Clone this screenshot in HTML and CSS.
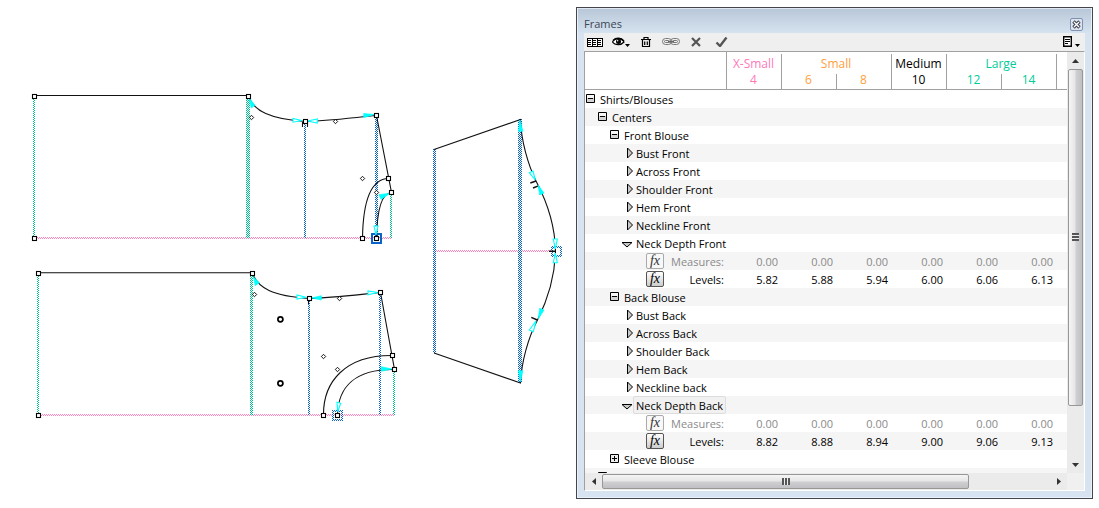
FILE: index.html
```html
<!DOCTYPE html>
<html lang="en">
<head>
<meta charset="utf-8">
<title>Frames</title>
<link rel="stylesheet" href="styles.css">
</head>
<body>
<svg class="defs" aria-hidden="true">
  <defs>
    <pattern id="green" width="2" height="2" patternUnits="userSpaceOnUse"><path d="M0 0h1v1H0zM1 1h1v1H1z" fill="#00c48c"/></pattern>
    <pattern id="blue" width="2" height="2" patternUnits="userSpaceOnUse"><path d="M0 0h1v1H0zM1 1h1v1H1z" fill="#0a64c8"/></pattern>
    <pattern id="pink" width="2" height="2" patternUnits="userSpaceOnUse"><path d="M0 0h1v1H0zM1 1h1v1H1z" fill="#ff82be"/></pattern>
    <symbol id="minus" viewBox="0 0 12 12"><path d="M1.500 1.500h8v8h-8z" fill="#d4d4d4" stroke="#000"/><path d="M2 2h7v3H2z" fill="#f6f6f6"/><path d="M3 5.500h5" stroke="#000"/></symbol>
    <symbol id="plus" viewBox="0 0 12 12"><path d="M1.500 1.500h8v8h-8z" fill="#eee" stroke="#000"/><path d="M3 5.500h5M5.500 3v5" stroke="#000"/></symbol>
    <symbol id="closed" viewBox="0 0 12 12"><path d="M6.500 1v10l5-5z" fill="#c8c8c8" stroke="#000" stroke-width="1"/></symbol>
    <symbol id="open" viewBox="0 0 12 12"><path d="M1 5.500h10l-5 4.500z" fill="#c8c8c8" stroke="#000" stroke-width="1"/></symbol>
    <g id="handle"><rect x="-2" y="-2" width="4" height="4" fill="#fff" stroke="#000" stroke-width="1.100"/></g>
    <g id="diamond"><path d="M0-2.200L2.200 0 0 2.200-2.200 0z" fill="#fff" stroke="#000" stroke-width=".9"/></g>
  </defs>
</svg>
<main class="workspace">
  <section class="drawing" aria-label="Pattern pieces">
    <svg class="pieces" width="576" height="508" viewBox="0 0 576 508" role="img" aria-label="Front, back and sleeve pattern">
      <g shape-rendering="crispEdges">
        <path fill="url(#pink)" d="M35 237h356v2H35zM39 414h355v2H39zM435 250h116v2H435z"/>
        <path fill="url(#green)" d="M33 97h2v141h-2zM246 97h4v141h-4zM390 193h2v45h-2zM37 274h2v141h-2zM250 274h3v141h-3zM393 370h2v45h-2z"/>
        <path fill="url(#blue)" d="M304 122h2v116h-2zM375 116h3v122h-3zM308 299h2v116h-2zM379 293h2v122h-2zM433 149h3v204h-3zM518 119h4v264h-4z"/>
        <path fill="url(#blue)" fill-rule="evenodd" d="M332 410h11v11h-11zM334 412h7v7h-7zM551 246h11v11h-11zM553 248h7v7h-7z"/>
        <path fill="none" stroke="#0a64c8" stroke-width="2" d="M372 234h9v9h-9z"/>
      </g>
      <g fill="none" stroke="#111" stroke-width="1.100">
        <path d="M34 95.500H248M248.500 96.500C254 111 270 119 305.500 121.500C325 121 350 118 376.500 115.500L391.500 192.500C381 193 377 212 376.500 238.500M388.500 178.500C371 179 363 200 362.500 238.500M302.500 127v-5M307.500 127v-5"/>
        <path d="M38 272.700H252M252.500 273.500C258 288 272 296 309.500 298.500C330 298 355 295 380.500 292.500L394.500 369.500C355 369 338 387 337.500 415.500M392.500 355.500C345 355 323 382 323.500 415.500M308.500 298v6"/>
        <path d="M434 149.500L520.500 119.500C521 140 528 165 536.500 182C547 202 555 225 555.500 251C555 278 548 299 537.500 320C528 338 521.500 362 520.500 383L434 353"/>
        <path stroke-width="1.400" d="M530.300 183l5.700-2M533 188l6-2.300M531.300 317.300l6 2.700M549 251.300h7"/>
      </g>
      <g fill="#0ff" stroke="#0ff" stroke-width=".7">
        <path d="M249 98l2.300 10 3.700-2.700zM363.700 113.500v4.200l10.300-3.200zM379 194.700l2 4.600 9-6zM253.300 276.700l2 9 4-3zM311.700 298l9.600-2.300v4.300zM381.300 366.700v4.600l10.400-2.300zM520 120l-1.500 11.300h4.400zM538 185l1.700 10 4.300-2zM539.700 308.300l4.300 1.700-5.700 9zM518.500 370.700h4.400L520.300 382z"/>
        <path fill="#fff" stroke-width="1.100" d="M293 118.500v3.700l8.700-1.700zM307.500 121l9.800-2v4zM374 226h4l-2 9zM297 295v4l9-1.700zM368 291v3.700l9.700-2.200zM337 402.300l3.700 1-3 8.400zM529.300 172.700l3.700-1.700 2.300 9zM553.300 239h4l-2 10zM553.300 262.700h4l-2-9.700zM529.300 330l4 1.700 2.700-10.700z"/>
      </g>
      <use href="#handle" x="34.500" y="96.500"/><use href="#handle" x="34.500" y="238.500"/>
      <use href="#handle" x="248.500" y="96.500"/><use href="#handle" x="305.500" y="121.500"/>
      <use href="#handle" x="376.500" y="115.500"/><use href="#handle" x="388.500" y="178.500"/>
      <use href="#handle" x="391.500" y="192.500"/><use href="#handle" x="362.500" y="238.500"/>
      <use href="#handle" x="376.500" y="238.500"/>
      <use href="#handle" x="38.500" y="273.500"/><use href="#handle" x="38.500" y="415.500"/>
      <use href="#handle" x="252.500" y="273.500"/><use href="#handle" x="309.500" y="298.500"/>
      <use href="#handle" x="380.500" y="292.500"/><use href="#handle" x="392.500" y="355.500"/>
      <use href="#handle" x="394.500" y="369.500"/><use href="#handle" x="323.500" y="415.500"/>
      <use href="#handle" x="337.500" y="415.500"/>
      <use href="#diamond" x="251.500" y="117.500"/><use href="#diamond" x="335.500" y="121.500"/>
      <use href="#diamond" x="362.500" y="178.500"/><use href="#diamond" x="376.500" y="192.500"/>
      <use href="#diamond" x="254.500" y="294.500"/><use href="#diamond" x="339.500" y="298.500"/>
      <use href="#diamond" x="323.500" y="356.500"/><use href="#diamond" x="337.500" y="369.500"/>
      <g fill="#fff" stroke="#000" stroke-width="1.700"><circle cx="280.400" cy="319.300" r="2.500"/><circle cx="280.400" cy="383.300" r="2.500"/></g>
    </svg>
  </section>

  <section class="panel" aria-labelledby="panel-title">
    <header class="titlebar">
      <h1 class="title" id="panel-title">Frames</h1>
      <button class="close" aria-label="Close"><svg width="9" height="9" viewBox="0 0 9 9"><path d="M1.500 1.500l6 6M7.500 1.500l-6 6" stroke="#3c4250" stroke-width="3.400"/><path d="M2 2l5 5M7 2L2 7" stroke="#fff" stroke-width="1.300"/></svg></button>
    </header>
    <div class="toolbar" role="toolbar" aria-label="Frames tools">
      <button class="tool" aria-label="Columns"><svg width="16" height="9" viewBox="0 0 16 9"><path d="M0 0h16v9H0z"/><path d="M1 1h4v7H1zM6 1h4v7H6zM11 1h4v7h-4z" fill="#fff"/><path d="M1 2h3v1H1zM1 4h3v1H1zM1 6h3v1H1zM6 2h3v1H6zM6 4h3v1H6zM6 6h3v1H6zM11 2h3v1h-3zM11 4h3v1h-3zM11 6h3v1h-3z"/></svg></button>
      <button class="tool" aria-label="Visibility"><svg width="18" height="10" viewBox="0 0 18 10"><path d="M.5 5C3 .5 9 .5 12 5 9 8.500 3 8.500.5 5z" fill="#fff" stroke="#000" stroke-width="1.200"/><path d="M1 3.500C4 .5 9 .5 12 4" fill="none" stroke="#000" stroke-width="1.400"/><circle cx="6.500" cy="4.500" r="2.500"/><circle cx="5.700" cy="3.800" r=".7" fill="#fff"/><path d="M13 7h5l-2.500 3z"/></svg></button>
      <button class="tool" aria-label="Delete"><svg width="10" height="10" viewBox="0 0 10 10"><path d="M0 2.500h10M3 2V.5h4V2M1.500 3v6.500h7V3M3.700 4.500V8M6.300 4.500V8" fill="none" stroke="#000" stroke-width="1.200"/></svg></button>
      <button class="tool" aria-label="Link"><svg width="18" height="8" viewBox="0 0 18 8"><g fill="none" stroke="#777" stroke-width="1"><rect x=".5" y=".5" width="9" height="6" rx="3"/><rect x="2.500" y="2.500" width="5" height="2" rx="1"/><rect x="8.500" y=".5" width="9" height="6" rx="3"/><rect x="10.500" y="2.500" width="5" height="2" rx="1"/></g><path d="M6 3h6v1.500H6z" fill="#666"/></svg></button>
      <button class="tool" aria-label="Cancel"><svg width="10" height="10" viewBox="0 0 10 10"><path d="M1 1l8 8M9 1L1 9" stroke="#555" stroke-width="2.200"/></svg></button>
      <button class="tool" aria-label="Apply"><svg width="16" height="10" viewBox="-4 0 16 10"><path d="M.5 5.500L4 9 10.500.5" fill="none" stroke="#555" stroke-width="2.400"/></svg></button>
      <button class="tool tool-menu" aria-label="Panel menu"><svg width="18" height="12" viewBox="0 0 18 12"><path d="M.7.7h7.600v9.600H.7z" fill="#fff" stroke="#000" stroke-width="1.400"/><path d="M2 3.500h5M2 5.500h5M2 7.500h3" stroke="#000"/><path d="M12 8h5l-2.500 3z"/></svg></button>
    </div>
    <div class="content">
      <div class="tree">
        <table class="grid">
          <colgroup><col class="c-name"><col class="c-size"><col class="c-size"><col class="c-size"><col class="c-size"><col class="c-size"><col class="c-size"><col></colgroup>
          <thead>
            <tr class="groups"><td rowspan="2"></td><th class="first xs">X-Small</th><th colspan="2" class="s">Small</th><th class="m">Medium</th><th colspan="2" class="l">Large</th><td></td></tr>
            <tr class="sizes"><th class="edge xs">4</th><th class="edge s">6</th><th class="s rule">8</th><th class="edge m">10</th><th class="edge l">12</th><th class="l rule">14</th><td class="edge"></td></tr>
          </thead>
          <tbody>
            <tr><th colspan="8"><div class="item l0"><button class="toggle" aria-label="Collapse"><svg><use href="#minus"/></svg></button><span class="name">Shirts/Blouses</span></div></th></tr>
            <tr><th colspan="8"><div class="item l1"><button class="toggle" aria-label="Collapse"><svg><use href="#minus"/></svg></button><span class="name">Centers</span></div></th></tr>
            <tr><th colspan="8"><div class="item l2"><button class="toggle" aria-label="Collapse"><svg><use href="#minus"/></svg></button><span class="name">Front Blouse</span></div></th></tr>
            <tr><th colspan="8"><div class="item l3"><button class="toggle" aria-label="Expand"><svg><use href="#closed"/></svg></button><span class="name">Bust Front</span></div></th></tr>
            <tr><th colspan="8"><div class="item l3"><button class="toggle" aria-label="Expand"><svg><use href="#closed"/></svg></button><span class="name">Across Front</span></div></th></tr>
            <tr><th colspan="8"><div class="item l3"><button class="toggle" aria-label="Expand"><svg><use href="#closed"/></svg></button><span class="name">Shoulder Front</span></div></th></tr>
            <tr><th colspan="8"><div class="item l3"><button class="toggle" aria-label="Expand"><svg><use href="#closed"/></svg></button><span class="name">Hem Front</span></div></th></tr>
            <tr><th colspan="8"><div class="item l3"><button class="toggle" aria-label="Expand"><svg><use href="#closed"/></svg></button><span class="name">Neckline Front</span></div></th></tr>
            <tr><th colspan="8"><div class="item l3"><button class="toggle" aria-label="Collapse"><svg><use href="#open"/></svg></button><span class="name">Neck Depth Front</span></div></th></tr>
            <tr class="muted"><th><div class="item field"><button class="fx"><i>fx</i></button><span class="label">Measures:</span></div></th><td>0.00</td><td>0.00</td><td>0.00</td><td>0.00</td><td>0.00</td><td>0.00</td><td></td></tr>
            <tr><th><div class="item field"><button class="fx"><i>fx</i></button><span class="label">Levels:</span></div></th><td>5.82</td><td>5.88</td><td>5.94</td><td>6.00</td><td>6.06</td><td>6.13</td><td></td></tr>
            <tr><th colspan="8"><div class="item l2"><button class="toggle" aria-label="Collapse"><svg><use href="#minus"/></svg></button><span class="name">Back Blouse</span></div></th></tr>
            <tr><th colspan="8"><div class="item l3"><button class="toggle" aria-label="Expand"><svg><use href="#closed"/></svg></button><span class="name">Bust Back</span></div></th></tr>
            <tr><th colspan="8"><div class="item l3"><button class="toggle" aria-label="Expand"><svg><use href="#closed"/></svg></button><span class="name">Across Back</span></div></th></tr>
            <tr><th colspan="8"><div class="item l3"><button class="toggle" aria-label="Expand"><svg><use href="#closed"/></svg></button><span class="name">Shoulder Back</span></div></th></tr>
            <tr><th colspan="8"><div class="item l3"><button class="toggle" aria-label="Expand"><svg><use href="#closed"/></svg></button><span class="name">Hem Back</span></div></th></tr>
            <tr><th colspan="8"><div class="item l3"><button class="toggle" aria-label="Expand"><svg><use href="#closed"/></svg></button><span class="name">Neckline back</span></div></th></tr>
            <tr><th colspan="8"><div class="item l3"><button class="toggle" aria-label="Collapse"><svg><use href="#open"/></svg></button><span class="name selected">Neck Depth Back</span></div></th></tr>
            <tr class="muted"><th><div class="item field"><button class="fx"><i>fx</i></button><span class="label">Measures:</span></div></th><td>0.00</td><td>0.00</td><td>0.00</td><td>0.00</td><td>0.00</td><td>0.00</td><td></td></tr>
            <tr><th><div class="item field"><button class="fx"><i>fx</i></button><span class="label">Levels:</span></div></th><td>8.82</td><td>8.88</td><td>8.94</td><td>9.00</td><td>9.06</td><td>9.13</td><td></td></tr>
            <tr><th colspan="8"><div class="item l2"><button class="toggle" aria-label="Expand"><svg><use href="#plus"/></svg></button><span class="name">Sleeve Blouse</span></div></th></tr>
            <tr><th colspan="8"><div class="item l1"><button class="toggle" aria-label="Expand"><svg><use href="#plus"/></svg></button></div></th></tr>
          </tbody>
        </table>
      </div>
      <div class="scroll scroll-v">
        <button class="arrow" aria-label="Scroll up"><svg width="8" height="4" viewBox="0 0 8 4"><path d="M0 4h7L3.500 0z" fill="#333"/></svg></button>
        <div class="track"><div class="thumb"><span class="grip"></span></div></div>
        <button class="arrow" aria-label="Scroll down"><svg width="8" height="4" viewBox="0 0 8 4"><path d="M0 0h7L3.500 4z" fill="#333"/></svg></button>
      </div>
      <div class="scroll scroll-h">
        <button class="arrow" aria-label="Scroll left"><svg width="4" height="8" viewBox="0 0 4 8"><path d="M4 0v7L0 3.500z" fill="#333"/></svg></button>
        <div class="track"><div class="thumb"><span class="grip"></span></div></div>
        <button class="arrow" aria-label="Scroll right"><svg width="4" height="8" viewBox="0 0 4 8"><path d="M0 0v7l4-3.500z" fill="#333"/></svg></button>
      </div>
    </div>
  </section>
</main>
</body>
</html>
```
FILE: styles.css
```css
* { box-sizing: border-box; }
body {
  margin: 0;
  background: #fff;
  color: #000;
  font: 12px/16px "Open Sans", "Noto Sans", sans-serif;
}
button {
  display: flex;
  align-items: center;
  justify-content: center;
  margin: 0;
  padding: 0;
  border: 0;
  background: none;
  color: inherit;
  font: inherit;
}
svg { display: block; flex: none; }
.defs { position: absolute; width: 0; height: 0; }

.workspace {
  display: grid;
  grid-template: minmax(0, 1fr) / minmax(0, 1fr) 517px;
  height: 100vh;
  padding-right: 6px;
  overflow: hidden;
}
.drawing { overflow: hidden; }
.panel {
  display: flex;
  flex-direction: column;
  min-height: 0;
  margin: 7px 0 9px;
  padding: 0 7px 7px;
  border: 1px solid #45454c;
  background: #d7e3f1;
  box-shadow: inset 0 0 0 1px #eaf1f9;
}

.titlebar {
  display: flex;
  flex: none;
  align-items: center;
  justify-content: space-between;
  height: 25px;
  margin: 0 -6px;
  padding: 6px 8px 0 6px;
  background: linear-gradient(#b9c8d8, #d5e2f0);
  border-top: 1px solid #dfe8f2;
}
.title { margin: 0; font-size: 11px; font-weight: 400; color: #3c4656; }
.close {
  width: 13px;
  height: 13px;
  border: 1px solid #8090b0;
  border-radius: 2px;
  background: #dce4ee;
}

.toolbar {
  display: flex;
  flex: none;
  align-items: center;
  gap: 9px;
  height: 18px;
  padding: 0 4px 0 3px;
  background: #efefef;
}
.tool { flex: none; }
.tool:nth-child(n+3) { margin-left: 2px; }
.tool.tool-menu { margin-left: auto; }

.content {
  flex: 1;
  min-height: 0;
  display: grid;
  grid-template: minmax(0, 1fr) 17px / minmax(0, 1fr) 17px;
  border-top: 1px solid #a0a0a0;
  border-left: 1px solid #a0a0a0;
  border-right: 1px solid #fff;
  border-bottom: 1px solid #fff;
  background: #f0f0f0;
}
.tree { overflow: hidden; background: #fff; }
.grid { width: 100%; table-layout: fixed; border-collapse: separate; border-spacing: 0; }
.c-name { width: 141px; }
.c-size { width: 55px; }
th, td { padding: 0; font-weight: 400; }
thead th { text-align: center; }
thead th, thead td {
  background: linear-gradient(#a0a0a0, #a0a0a0) no-repeat left 0 top 2px / 1px 100%;
}
.groups > td:first-child { background: none; border-bottom: 1px solid #a0a0a0; }
.groups > .first { background-position: left 0 top 0; }
.groups { height: 20px; line-height: 16px; }
.groups > th { padding-top: 4px; }
.sizes { height: 18px; line-height: 13px; }
.sizes > * { border-bottom: 1px solid #a0a0a0; padding-bottom: 3px; }
.sizes > .edge { background-position: left 0 top 0; }
.xs { color: #ff78b8; }
.s { color: #ffa040; }
.l { color: #0c9; }

tbody { font-size: 11px; }
tbody tr { height: 18px; }
tbody tr:nth-child(even) { background: #f5f5f5; }
tbody th { text-align: left; }
tbody td { padding: 2px 3px 0 0; line-height: 16px; text-align: right; }
.muted { color: #8a8a8a; }
.item { display: flex; align-items: center; height: 18px; }
.l1 { padding-left: 12px; }
.l2 { padding-left: 24px; }
.l3 { padding-left: 36px; }
.toggle, .toggle svg { width: 12px; height: 12px; }
.name { height: 18px; line-height: 16px; padding: 2px 3px 0; white-space: nowrap; }
.selected {
  border: 1px solid #ddd;
  border-radius: 2px;
  padding: 1px 2px 0;
  background: #f1f1f1;
}
.field { justify-content: space-between; padding: 0 2px 0 61px; }
.label { padding-top: 2px; }
.fx {
  width: 18px;
  height: 16px;
  border: 1px solid #555;
  border-radius: 2px;
  background: linear-gradient(#fff, #ccc);
  font: 14px/12px "Liberation Serif", serif;
}
.muted .fx { border-color: #aaa; background: #f8f8f8; color: #333; }

.scroll { display: flex; background: #ebebeb; }
.scroll-v { flex-direction: column; }
.scroll .arrow { flex: none; width: 17px; height: 17px; }
.track { flex: 1; min-width: 0; min-height: 0; }
.thumb {
  display: flex;
  align-items: center;
  justify-content: center;
  border: 1px solid #979797;
  border-radius: 2px;
}
.scroll-v .thumb { width: 15px; height: 87%; margin-left: 1px; background: linear-gradient(90deg, #f5f5f5, #e6e6e8 45%, #cfcfd2 55%, #c0c0c4); }
.scroll-h .thumb { height: 15px; width: 82%; margin-top: 1px; background: linear-gradient(#f5f5f5, #e6e6e8 45%, #cfcfd2 55%, #c0c0c4); }
.scroll-v .grip { width: 7px; height: 8px; background: repeating-linear-gradient(#555 0 2px, #eee 2px 3px); }
.scroll-h .grip { width: 8px; height: 7px; background: repeating-linear-gradient(90deg, #555 0 2px, #eee 2px 3px); }
```
